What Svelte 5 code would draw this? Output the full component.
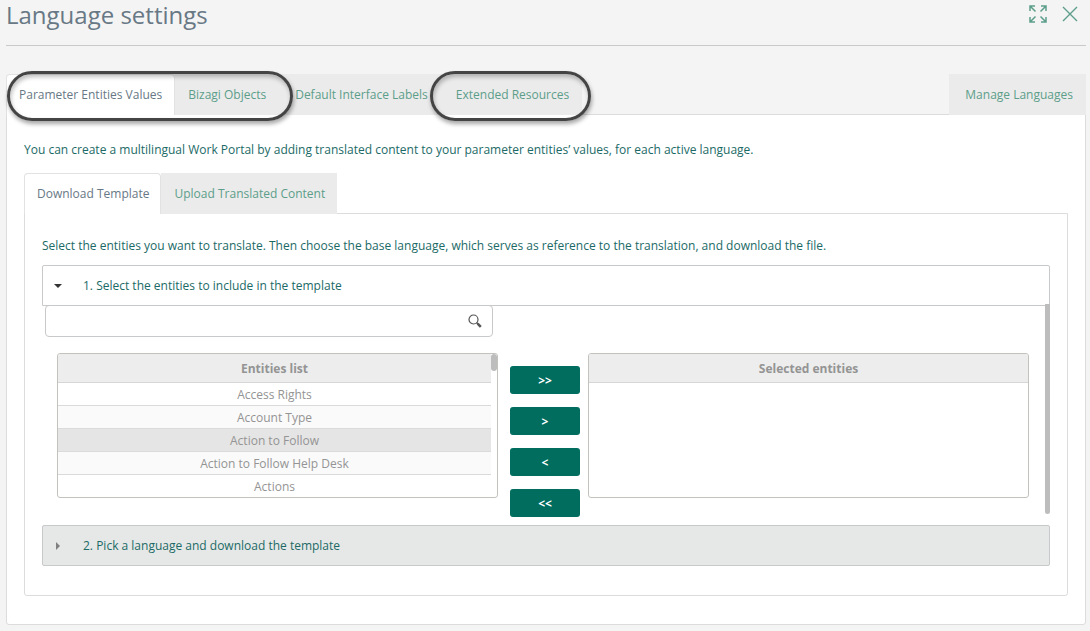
<script lang="ts">
    const tabs = [
        "Parameter Entities Values",
        "Bizagi Objects",
        "Default Interface Labels",
        "Extended Resources",
    ];

    const entities = [
        "Access Rights",
        "Account Type",
        "Action to Follow",
        "Action to Follow Help Desk",
        "Actions",
    ];

    let activeTab = $state(0);
    let selected = $state(2);
    let query = $state("");
</script>

<main class="page">
    <header class="header">
        <h1>Language settings</h1>
        <div class="window-actions">
            <button class="icon-button" aria-label="Full screen">
                <svg width="18" height="18" viewBox="0 0 18 18" fill="none" stroke="currentColor" stroke-width="1.5">
                    <path d="M1 6V1h5M1 1l5.5 5.5M12 1h5v5M17 1l-5.500 5.500M1 12v5h5M1 17l5.500-5.500M17 12v5h-5M17 17l-5.500-5.500" />
                </svg>
            </button>
            <button class="icon-button" aria-label="Close">
                <svg width="16" height="16" viewBox="0 0 16 16" fill="none" stroke="currentColor" stroke-width="1.4">
                    <path d="M1 1l14 14M15 1L1 15" />
                </svg>
            </button>
        </div>
    </header>

    <nav class="tabs main-tabs">
        {#each tabs as tab, i}
            <button class="tab" class:active={activeTab == i} onclick={() => (activeTab = i)}>
                {tab}
            </button>
        {/each}
        <button class="tab manage">Manage Languages</button>
        <span class="highlight first"></span>
        <span class="highlight second"></span>
    </nav>

    <section class="panel">
        <p>
            You can create a multilingual Work Portal by adding translated content to your parameter
            entities’ values, for each active language.
        </p>

        <nav class="tabs sub-tabs">
            <button class="tab active">Download Template</button>
            <button class="tab">Upload Translated Content</button>
        </nav>

        <section class="panel inner">
            <p>
                Select the entities you want to translate. Then choose the base language, which serves
                as reference to the translation, and download the file.
            </p>

            <button class="step open" aria-expanded="true">
                <svg width="8" height="8" viewBox="0 0 8 8"><path d="M0 2h8L4 6z" fill="#333" /></svg>
                1. Select the entities to include in the template
            </button>

            <div class="step-body">
                <div class="search">
                    <input type="text" aria-label="Search entities" bind:value={query} />
                    <button class="search-button" aria-label="Search">
                        <svg width="14" height="14" viewBox="0 0 14 14" fill="none" stroke="#555">
                            <circle cx="5.5" cy="5.5" r="4.5" stroke-width="1.2" />
                            <path d="M8.5 8.5l1.5 1.5" stroke-width="1.4" />
                            <path d="M9.6 9.6l3.2 3.2" stroke-width="2.6" />
                        </svg>
                    </button>
                </div>

                <div class="picker">
                    <div class="list">
                        <table class="scrolled">
                            <thead>
                                <tr><th>Entities list</th></tr>
                            </thead>
                            <tbody>
                                {#each entities as entity, i}
                                    <tr class:selected={selected == i} onclick={() => (selected = i)}>
                                        <td>{entity}</td>
                                    </tr>
                                {/each}
                            </tbody>
                        </table>
                        <span class="list-thumb"></span>
                    </div>

                    <div class="moves">
                        <button aria-label="Add all">&gt;&gt;</button>
                        <button aria-label="Add">&gt;</button>
                        <button aria-label="Remove">&lt;</button>
                        <button aria-label="Remove all">&lt;&lt;</button>
                    </div>

                    <div class="list">
                        <table>
                            <thead>
                                <tr><th>Selected entities</th></tr>
                            </thead>
                        </table>
                    </div>
                </div>
                <span class="body-thumb"></span>
            </div>

            <button class="step" aria-expanded="false">
                <svg width="8" height="8" viewBox="0 0 8 8"><path d="M2 0v8l4-4z" fill="#808080" /></svg>
                2. Pick a language and download the template
            </button>
        </section>
    </section>
</main>

<style>
    :global(body) {
        background: #f4f4f4;
    }

    .page {
        box-sizing: border-box;
        padding: 0 4px 6px 6px;
        font-family: "Open Sans", sans-serif;
        font-size: 12px;
        line-height: 16px;
        color: #1b6a66;
    }

    .page * {
        box-sizing: border-box;
    }

    button {
        font: inherit;
        color: inherit;
        border: 0;
        padding: 0;
        margin: 0;
        background: none;
        cursor: pointer;
    }

    svg {
        display: block;
        flex: none;
    }

    p {
        margin: 0;
    }

    .header {
        display: flex;
        justify-content: space-between;
        height: 46px;
        border-bottom: 1px solid #c8c9ca;
    }

    h1 {
        margin: 0;
        font-size: 24px;
        line-height: 30px;
        font-weight: 400;
        color: #687885;
    }

    .window-actions {
        display: flex;
        align-items: center;
        gap: 15px;
        height: 28px;
        padding-right: 8px;
        color: #5c9e8a;
    }

    .tabs {
        display: flex;
        position: relative;
    }

    .tab {
        height: 41px;
        padding: 0 13px;
        background: #ebebeb;
        color: #5c9e8a;
        white-space: nowrap;
    }

    .tab.active {
        padding: 0 12px;
        background: #fff;
        border: 1px solid #e2e2e2;
        border-bottom: 0;
        border-radius: 4px 4px 0 0;
        color: #687885;
    }

    .main-tabs {
        margin-top: 28px;
    }

    .main-tabs .tab:nth-child(3) {
        padding: 0 14px 0 16px;
    }

    .main-tabs .tab:nth-child(4) {
        padding: 0 13px 0 14px;
    }

    .main-tabs .manage {
        margin-left: auto;
        padding: 0 13px 0 16px;
    }

    .highlight {
        position: absolute;
        top: -3px;
        height: 50px;
        border: 3px solid #444;
        border-radius: 26px;
        box-shadow: 1px 3px 4px rgba(0, 0, 0, 0.35), inset 1px 3px 4px rgba(0, 0, 0, 0.25);
        pointer-events: none;
    }

    .highlight.first {
        left: 1px;
        width: 286px;
    }

    .highlight.second {
        left: 424px;
        width: 161px;
    }

    .panel {
        margin-top: -1px;
        padding: 27px 17px 28px;
        background: #fff;
        border: 1px solid #dcdcdc;
        border-radius: 0 0 3px 3px;
    }

    .sub-tabs {
        margin-top: 15px;
    }

    .sub-tabs .tab {
        padding: 0 12px 0 13px;
    }

    .sub-tabs .tab.active {
        padding: 0 11px 0 12px;
    }

    .panel.inner {
        padding: 24px 17px 29px;
    }

    .step {
        display: flex;
        align-items: center;
        gap: 21px;
        width: 100%;
        height: 41px;
        padding: 0 11px;
        background: #e6e8e7;
        border: 1px solid #c8c9ca;
        border-radius: 2px;
    }

    .step.open {
        margin-top: 11px;
        background: #fff;
        border-radius: 2px 2px 0 0;
    }

    .step-body {
        position: relative;
        padding: 0 21px 8px 15px;
    }

    .search {
        display: flex;
        align-items: center;
        width: 448px;
        max-width: 100%;
        height: 32px;
        margin: -1px 0 0 -12px;
        padding-right: 10px;
        border: 1px solid #c8c9ca;
        border-radius: 4px;
    }

    .search input {
        flex: 1;
        height: 28px;
        padding: 0 8px;
        border: 0;
        outline: 0;
        background: transparent;
        font: inherit;
    }

    .picker {
        display: flex;
        align-items: flex-start;
        margin-top: 16px;
    }

    .list {
        position: relative;
        flex: 1;
        height: 145px;
        overflow: hidden;
        border: 1px solid #c3c3be;
        border-radius: 3px;
        color: #949494;
    }

    table {
        width: 100%;
        border-spacing: 0;
        text-align: center;
    }

    table.scrolled {
        width: calc(100% - 6px);
    }

    th {
        height: 29px;
        padding: 2px 0 0;
        background: #ededed;
        border-bottom: 1px solid #d6d6d6;
        font-weight: 700;
    }

    td {
        height: 23px;
        padding: 2px 0 0;
        border-bottom: 1px solid #dadada;
    }

    tbody tr:nth-child(even) {
        background: #fafafa;
    }

    tbody tr.selected {
        background: #e5e5e5;
    }

    .list-thumb {
        position: absolute;
        top: 0;
        right: 0;
        width: 6px;
        height: 17px;
        border-radius: 3px;
        background: #bdbdbd;
    }

    .moves {
        display: flex;
        flex-direction: column;
        gap: 13px;
        margin: 13px 8px 0 12px;
    }

    .moves button {
        width: 70px;
        height: 28px;
        padding-top: 2px;
        border-radius: 3px;
        background: #006d5f;
        color: #fff;
        font-weight: 700;
    }

    .body-thumb {
        position: absolute;
        top: -1px;
        right: 0;
        width: 5px;
        height: 210px;
        border-radius: 0 0 3px 3px;
        background: #bdbdbd;
    }
</style>
